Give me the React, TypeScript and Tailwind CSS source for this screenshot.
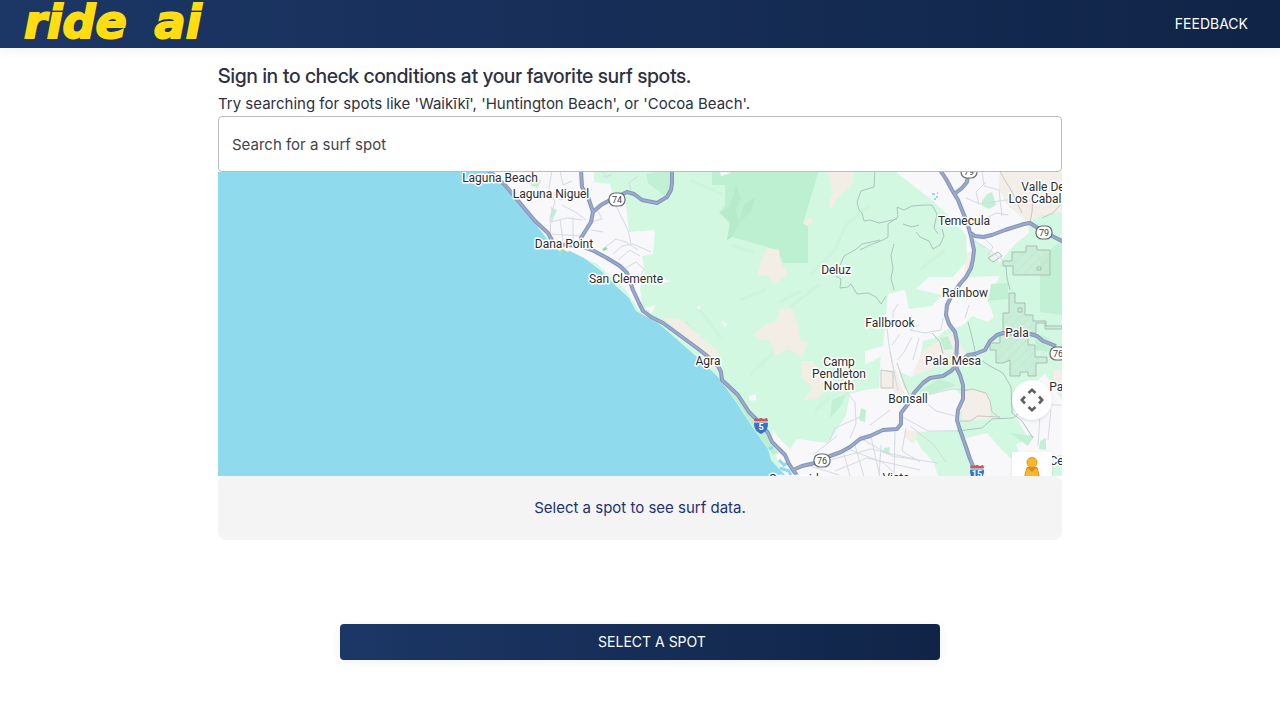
type Place = { x: number; y: number; lines: string[] };

const places: Place[] = [
  { x: 500, y: 182, lines: ["Laguna Beach"] },
  { x: 551, y: 198, lines: ["Laguna Niguel"] },
  { x: 564, y: 248, lines: ["Dana Point"] },
  { x: 626, y: 283, lines: ["San Clemente"] },
  { x: 708, y: 365, lines: ["Agra"] },
  { x: 836, y: 274, lines: ["Deluz"] },
  { x: 839, y: 366, lines: ["Camp", "Pendleton", "North"] },
  { x: 890, y: 327, lines: ["Fallbrook"] },
  { x: 908, y: 403, lines: ["Bonsall"] },
  { x: 953, y: 365, lines: ["Pala Mesa"] },
  { x: 1017, y: 337, lines: ["Pala"] },
  { x: 965, y: 297, lines: ["Rainbow"] },
  { x: 964, y: 225, lines: ["Temecula"] },
  { x: 1043, y: 191, lines: ["Valle De", "Los Caballos"] },
  { x: 1068, y: 391, lines: ["Pauma"] },
  { x: 1067, y: 465, lines: ["Center"] },
  { x: 896, y: 482, lines: ["Vista"] },
  { x: 797, y: 483, lines: ["Oceanside"] },
];

const roads = [
  "M488 170 L505 185 L535 221 L548 233 L554 244 L580 246",
  "M581 170 L582 187 L588 197 L593 212 L591 222 L581 238 L581 246 L592 250 L607 258 L620 266 L627 273 L633 290 L639 303 L643 311 L651 317 L663 323 L697 348 L706 355 L718 366 L721 372 L722 380 L738 395 L749 412 L762 425 L768 433 L772 442 L785 455 L789 464 L793 470 L800 480",
  "M593 212 L601 205 L610 200 L627 192 L634 194 L642 200 L657 203 L667 197 L671 190 L672 183 L672 170",
  "M940 170 L946 179 L952 190 L958 200 L962 210 L967 222 L971 236 L974 250 L973 259 L971 268 L966 277 L960 284 L951 297 L947 305 L946 315 L949 324 L955 332 L957 342 L956 367 L960 375 L963 385 L963 399 L958 410 L957 420 L960 430 L966 447 L970 459 L977 475",
  "M953 195 L962 188 L967 182 L968 175",
  "M971 233 L975 236 L983 237 L992 235 L1005 230 L1024 224 L1030 223 L1044 232 L1064 242",
  "M793 470 L802 466 L815 463 L830 456 L841 452 L850 447 L860 439 L870 436 L883 430 L897 429 L901 424 L901 413 L908 404 L914 393 L923 383 L930 378 L943 376 L951 371 L957 365 L968 355 L975 354 L985 350 L990 341 L997 335 L1003 333 L1030 334 L1037 336 L1043 341 L1056 346",
];

const creeks = [
  "M875 170 L874 187 L861 191 L857 202 L859 210 L862 213 L864 221 L870 220 L879 223 L888 221",
  "M860 250 L870 245 L883 240 L888 237 L888 224 L898 217 L897 207 L904 210 L912 206 L925 205 L932 205 L937 214 L934 228 L938 234 M888 221 L897 219 M903 224 L912 227 L919 225 M916 232 L920 237 L929 241 L933 249 L940 245 L944 236 L942 229 M894 244 L891 255 L893 268 L891 278 L894 290",
  "M880 240 L862 244 L855 250 L844 256 L841 263 L836 276 L841 279 L840 288 L848 287 L851 284 L857 294 L868 293 L876 297 L881 304 L886 296",
  "M1006 266 L1007 278 L1010 290 M968 322 L971 333 L974 346 L976 357 M976 357 L990 366 L1003 373 L1011 387 L1012 413 L1022 421 L1033 438 M932 333 L940 342 L943 354 M957 431 L982 428 L992 419 L1013 418 L1019 413",
];

const streets = [
  "M552 170 L549 188 L555 202 L550 218 L551 240 M549 190 L560 200 L577 195 M560 170 L563 185 L572 181 M551 222 L567 218 L582 220 M560 219 L563 241 M573 217 L573 240 M552 234 L580 236 M562 205 L577 213 L586 220 M590 222 L602 219 L598 211 M591 230 L603 232",
  "M601 170 L607 178 L614 170 M603 177 L611 175 M612 196 L617 208 L628 230 L631 244 M604 248 L616 239 L626 242 L638 250 M613 254 L622 246 L633 244 L651 252 M618 260 L630 250 L640 256 M624 269 L636 262 L644 269 L640 277 M631 280 L644 283 M631 190 L629 183 L638 176",
  "M966 198 L980 204 L1006 200 L1030 200 M979 204 L976 192 L986 182 M982 170 L984 186 L999 190 L1002 216 M980 222 L996 213 L1008 215 M972 240 L985 247 L1004 261 M980 234 L993 247 L988 255",
  "M898 304 L893 312 L893 325 M900 334 L892 345 M912 337 L904 352 L898 360 M919 338 L913 360 M919 325 L910 330 L925 333 L941 330 L943 318 M965 318 L969 305 M886 320 L889 345 L895 377",
  "M890 352 L895 377 L898 391 M910 397 L924 401 L936 411 L955 416 M910 399 L952 389 L967 390 M901 416 L928 431 L957 431 M842 388 L855 402 L856 424 L850 438",
  "M830 460 L871 449 L914 459 M835 471 L867 458 L920 470 M843 450 L851 480 M854 442 L864 477 M871 437 L880 477 M881 445 L879 475 M895 430 L894 480 M906 428 L902 451 L920 462 M860 438 L892 456 L938 463 M848 449 L884 463 L901 480 M813 455 L837 436 M807 465 L839 475 M910 426 L934 445 L946 462 M860 417 L835 428 L830 440 M890 410 L870 425",
  "M970 476 L985 466 M1042 405 L1062 405 M1040 414 L1038 446 M1051 410 L1048 440",
];

const tracks = [
  "M1030 223 L1032 212 L1033 192 M1042 218 L1053 213 L1062 203 M1000 172 L1011 190 L1022 213",
  "M963 391 L972 389 L986 393 L990 401 L992 412 L1000 418 M960 421 L970 421 L978 416 L1000 417 M881 370 V388 H893 V372 Z M897 363 L905 386 L911 399",
];

const shields = [
  { x: 617, y: 199, n: "74" },
  { x: 969, y: 171, n: "79" },
  { x: 1044, y: 232, n: "79" },
  { x: 1058, y: 353, n: "76" },
  { x: 822, y: 460, n: "76" },
];

const interstates = [
  { x: 761, y: 426, n: "5" },
  { x: 977, y: 473, n: "15" },
];

function Lines({ paths }: { paths: string[] }) {
  return (
    <>
      {paths.map((d) => (
        <path key={d} d={d} />
      ))}
    </>
  );
}

function TerrainMap() {
  return (
    <svg
      viewBox="218 172 844 304"
      preserveAspectRatio="xMidYMid slice"
      className="block h-full w-full"
      role="img"
      aria-label="Map of the coast from Laguna Beach to Oceanside"
    >
      <defs>
        <pattern id="reserve" width="7" height="7" patternUnits="userSpaceOnUse" patternTransform="rotate(45)">
          <path d="M0 0 V7" stroke="#b3dcc5" strokeWidth="1.5" />
        </pattern>
      </defs>
      <rect x="218" y="172" width="844" height="304" fill="#d3f8e2" />
      <path d="M712 170 H819 L803 224 L808 224 V263 H783 L777 250 L732 237 L727 240 L730 224 L719 212 L725 206 V185 H712Z" fill="#bdf0d1" />
      <path d="M736 185 L741 199 L736 211 L740 222 L731 238 L727 240 L730 221 L720 213 L730 206 Z M744 205 L755 197 L751 211 L738 224Z" fill="#aee5c4" opacity=".55" />
      <g fill="none" stroke="#c4efd4" strokeWidth="3" opacity=".4">
        <path d="M810 275 L835 250 L846 225 L870 205 M780 302 L801 291 M740 300 L765 290 M690 180 L722 194 M732 245 L754 253 M776 326 L795 303 L820 284 M920 270 L945 250 M750 375 L775 351 M815 411 L830 397 M685 322 L700 340 M700 310 L721 338" />
      </g>
      <g fill="#f2eee5">
        <path d="M827 170 H855 L852 185 L838 198 L831 209 L829 204 L833 193 Z M803 222 L811 217 L813 222 L806 226Z M766 248 L779 250 L781 263 L788 274 L774 284 L768 275 L757 276 L762 259Z" />
        <path d="M754 334 L766 324 L776 321 L780 309 L792 308 L798 325 L801 341 L808 342 L802 357 L789 349 L775 355 L770 341 L757 339Z M801 361 L813 361 L820 372 L830 388 L816 399 L803 400 L813 388 L802 378Z" />
        <path d="M654 309 L664 318 L680 319 L699 335 L717 350 L718 371 L708 363 L694 346Z" />
      </g>
      <g fill="#f8f7f9">
        <path d="M488 170 H594 L594 182 L610 184 L614 199 L625 197 L629 232 L655 230 L653 254 L642 256 L645 274 L640 287 L642 307 L658 321 L643 316 L625 289 L597 264 L565 250 L545 235Z" />
        <path d="M896 172 L1000 170 L999 190 L1010 207 L1028 222 L1029 233 L1014 245 L1000 262 L984 247 L974 239 L976 251 L972 269 L966 277 L1000 276 L992 290 L988 301 L994 317 L988 322 L972 316 L962 326 L945 330 L938 337 L923 341 L921 354 L930 364 L911 377 L896 370 L885 354 L865 365 V351 L883 346 L886 315 L888 294 L905 290 L909 309 L932 306 L942 295 L916 289 L929 277 H953 L967 261 L966 235 L951 218 L933 201Z" />
        <path d="M881 350 L895 360 L904 388 L912 397 L931 393 L955 389 L963 397 L960 414 L957 430 L914 432 L922 449 L934 463 L938 476 H785 L771 445 L773 430 L779 438 L790 449 L797 439 L828 443 L846 415 L850 394 L864 390 L879 388 Z" />
        <path d="M962 439 L987 433 L1002 450 L1018 465 V476 H982 L968 459Z M1020 395 L1045 374 L1062 400 V455 H1020 L1016 444 L1029 440 L1014 413Z M655 277 L671 281 L661 284Z M720 171 L731 173 L721 176Z M749 396 L756 394 L756 400 L749 401Z M696 307 L701 306 L700 310Z M645 308 L656 305 L652 313Z M721 321 L728 324 L725 327Z" />
      </g>
      <g fill="#f3eee7">
        <path d="M1000 170 H1062 V212 L1044 214 L1030 222 L1020 215 L1006 203 L1000 190Z M968 252 L974 251 L972 264 L967 275 L964 270Z M882 370 H896 L903 390 L910 400 L898 403 L893 388 L882 389Z M922 352 L942 338 L955 331 L956 350 L941 362 L928 371 L912 375Z M958 340 L967 354 L958 362Z M962 393 L974 389 L986 393 L991 405 L990 419 L962 421Z M1054 370 H1062 V390 L1053 388Z M904 430 L918 431 L914 444 L905 438Z" />
      </g>
      <g fill="#c2f0d4">
        <path d="M671 170 L672 187 L666 197 L648 183 L646 174Z M551 207 L557 210 L551 224Z M531 179 L541 180 L538 188 L531 186Z M982 201 L987 194 L992 192 L996 205 L989 209 L982 206Z M832 400 L846 394 L841 406 L830 418Z M861 408 L866 410 L865 422 L859 420Z M991 284 L1008 283 L1008 299 L988 301Z M1040 258 L1062 240 V315 L1040 312Z M1035 334 L1045 336 L1054 344 L1052 352 L1036 350Z M1010 433 L1034 436 L1028 446Z M1040 441 L1046 438 V450 L1039 449Z M884 448 L890 447 L889 455 L883 453Z M919 391 L939 379 L957 385 L925 396Z M940 338 L948 336 L953 349 L944 350Z" />
      </g>
      <path d="M915 438 L940 431 L958 432 L966 450 L971 470 L962 474 L946 476 L936 460 L922 450Z" fill="#d3f8e2" />
      <g fill="#c5ebd3" fillOpacity=".75" stroke="#a9bdb3" strokeWidth="1">
        <path d="M1003 261 H1012 V252 H1026 V246 H1037 V250 H1050 V275 H1013 V266 H1003Z M1037 267 H1041 V270 H1037Z" />
        <path d="M1003 313 H1009 V293 H1015 V303 H1025 V315 H1033 V321 H1046 V326 H1062 V329 H1045 V323 H1036 V333 H1028 V345 H1035 V357 H1047 V363 H1036 V376 H1028 V372 H1020 V376 H1010 V360 L1003 363 H996 V350 H990 V343 H1000 V335 H1003Z M1018 308 H1022 V312 H1018Z" />
        <path d="M998 252 L1002 256 L993 262 L988 258Z" fill="#f2f2f2" />
      </g>
      <path d="M1013 252 H1050 V275 H1013Z M1003 315 H1033 V345 H1046 V360 H1036 V374 H1010 V360 H996 V345 H1003Z" fill="url(#reserve)" opacity=".5" />
      <path d="M218 172 H491 L505 187 L534 222 L546 238 L554 248 L563 253 L570 251 L584 258 L600 270 L617 287 L629 298 L636 311 L647 317 L658 323 L697 357 L718 377 L736 402 L753 428 L768 449 L771 460 L780 470 L786 476 H218Z" fill="#90daee" />
      <path d="M720 379 L737 402 L755 430 L773 455 L779 453 L771 445 L767 436 L737 396Z" fill="#bcefce" />
      <path d="M779 460 L784 465 L787 463 M780 468 L789 471 L791 476 M769 449 L773 447" stroke="#90daee" strokeWidth="3" fill="none" />
      <path d="M506 170 L511 178 M932 194 h3 m1 3 h2 m-4 2 h2 m1 -6 h1" stroke="#90daee" strokeWidth="2" fill="none" />
      <path d="M561 250 L566 253 M603 250 L607 248" stroke="#9cd9b0" strokeWidth="3" />
      <g fill="none" strokeWidth="1" strokeLinejoin="round">
        <g stroke="#d5dae4"><Lines paths={streets} /></g>
        <g stroke="#a9c4bd"><Lines paths={creeks} /></g>
        <g stroke="#c9c6c4"><Lines paths={tracks} /></g>
      </g>
      <g fill="none" strokeLinejoin="round">
        <g stroke="#8494ba" strokeWidth="4"><Lines paths={roads} /></g>
        <g stroke="#9ba9cb" strokeWidth="2"><Lines paths={roads} /></g>
      </g>
      <g fontFamily="Roboto, sans-serif" textAnchor="middle">
        {shields.map((s) => (
          <g key={`${s.n}-${s.x}`}>
            <rect x={s.x - 8} y={s.y - 6} width="16" height="13" rx="6" fill="#fff" stroke="#656b73" strokeWidth="1.2" />
            <text x={s.x} y={s.y + 4} fontSize="9" fill="#3c4043">{s.n}</text>
          </g>
        ))}
        {interstates.map((s) => (
          <g key={s.n}>
            <path d={`M${s.x - 6} ${s.y - 8} q3 2 6 0 q3 2 6 0 l1 6 q0 7 -7 10 q-7 -3 -7 -10z`} fill="#3871ca" />
            <path d={`M${s.x - 6} ${s.y - 8} q3 2 6 0 q3 2 6 0 l1 3 h-14z`} fill="#d75548" />
            <path d={`M${s.x - 7} ${s.y - 4} h14`} stroke="#fff" />
            <text x={s.x} y={s.y + 4} fontSize="9" fontWeight="700" fill="#fff">{s.n}</text>
          </g>
        ))}
        {places.map((p) => (
          <text key={p.lines[0]} fontSize="12" fill="#2b2c30" stroke="#fff" strokeWidth="3" strokeLinejoin="round" paintOrder="stroke">
            {p.lines.map((line, i) => (
              <tspan key={line} x={p.x} y={p.y + i * 12}>{line}</tspan>
            ))}
          </text>
        ))}
      </g>
    </svg>
  );
}

function MapControls() {
  return (
    <>
      <button type="button" aria-label="Map camera controls" className="absolute top-[208px] right-[10px] flex size-10 items-center justify-center rounded-full bg-white shadow-sm">
        <svg viewBox="0 0 24 24" className="size-6" fill="none" stroke="#5f6368" strokeWidth="2.6">
          <path d="M8.5 5 L12 1.8 L15.5 5 M19 8.5 L22.2 12 L19 15.5 M15.5 19 L12 22.2 L8.5 19 M5 15.5 L1.8 12 L5 8.5" />
        </svg>
      </button>
      <button type="button" aria-label="Street View" className="absolute top-[280px] right-[10px] flex size-10 justify-center bg-white pt-1 shadow-sm">
        <svg viewBox="0 0 20 32" className="h-8 w-5">
          <path d="M5 11.5 H15 L18 23 L15 24 L14 31 H6 L5 24 L2 23Z" fill="#fbb829" stroke="#d99019" />
          <path d="M5.5 12 L10 16 L14.5 12 Z" fill="#dc8a1c" />
          <circle cx="10" cy="6.5" r="5" fill="#fbb829" stroke="#d99019" />
        </svg>
      </button>
    </>
  );
}

export default function App() {
  return (
    <div className="flex min-h-screen flex-col bg-white font-['Inter',sans-serif] text-[#2d3142]">
      <header className="flex h-12 items-center justify-between bg-linear-to-r from-[#1c3766] to-[#102447] pr-8 pl-6 shadow-[0_2px_12px_rgba(0,0,0,0.06)]">
        <a href="#" className="flex h-12 gap-7 font-['DejaVu_Sans',sans-serif] text-[46px] leading-[44px] font-bold text-[#ffdd12] italic [-webkit-text-stroke:2px_#ffdd12]">
          <span>ride</span>
          <span>ai</span>
        </a>
        <button type="button" className="text-sm text-white">FEEDBACK</button>
      </header>
      <main className="flex flex-col items-center px-4 pt-3">
        <section className="w-full max-w-[844px]">
          <h1 className="font-['Inter_Display','Inter',sans-serif] text-xl leading-8 font-medium">Sign in to check conditions at your favorite surf spots.</h1>
          <p className="text-[15px] leading-6">Try searching for spots like 'Waikīkī', 'Huntington Beach', or 'Cocoa Beach'.</p>
          <input
            type="text"
            aria-label="Search for a surf spot"
            placeholder="Search for a surf spot"
            className="block h-14 w-full rounded border border-[#bdbdbd] bg-white px-[13px] text-[15px] placeholder:text-[#444]"
          />
          <div className="relative h-[304px] overflow-hidden">
            <TerrainMap />
            <MapControls />
          </div>
          <p className="rounded-lg bg-[#f4f4f4] p-5 text-center text-[15px] leading-6 text-[#1c3273]">Select a spot to see surf data.</p>
        </section>
        <button type="button" className="mt-[84px] h-9 w-full max-w-[600px] rounded bg-linear-to-r from-[#1c3766] to-[#102447] pl-6 text-sm text-white shadow-[0_2px_12px_rgba(0,0,0,0.06)]">
          SELECT A SPOT
        </button>
      </main>
    </div>
  );
}
